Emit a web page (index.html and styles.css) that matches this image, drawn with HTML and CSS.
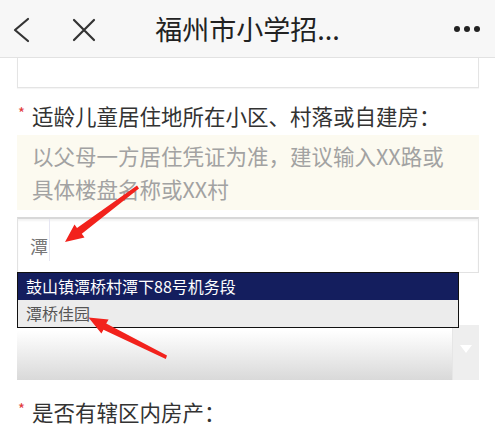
FILE: index.html
```html
<!DOCTYPE html>
<html lang="zh-CN">
<head>
<meta charset="utf-8">
<title>福州市小学招生</title>
<link rel="stylesheet" href="styles.css">
</head>
<body>
<div class="page">
  <header class="topbar">
    <div class="nav-left">
      <svg class="icon-back" width="20" height="28" viewBox="0 0 20 28"><path d="M17 3 L4 14 L17 25" fill="none" stroke="#333" stroke-width="2.2" stroke-linecap="round" stroke-linejoin="round"/></svg>
      <svg class="icon-close" width="26" height="26" viewBox="0 0 26 26"><path d="M3 3 L23 23 M23 3 L3 23" fill="none" stroke="#333" stroke-width="2.2" stroke-linecap="round"/></svg>
    </div>
    <div class="title">福州市小学招...</div>
    <div class="nav-right">
      <span class="dot"></span><span class="dot"></span><span class="dot"></span>
    </div>
  </header>

  <main class="form">
    <div class="prev-input"></div>

    <div class="label"><span class="req">*</span>适龄儿童居住地所在小区、村落或自建房：</div>
    <div class="hint">以父母一方居住凭证为准，建议输入XX路或具体楼盘名称或XX村</div>

    <div class="field-wrap">
      <div class="text-input"><span class="value">潭</span><span class="caret"></span></div>
      <ul class="suggest">
        <li class="item active">鼓山镇潭桥村潭下88号机务段</li>
        <li class="item">潭桥佳园</li>
      </ul>
    </div>

    <div class="select">
      <div class="select-body"></div>
      <div class="select-btn">
        <svg class="tri" width="14" height="10" viewBox="0 0 14 10"><polygon points="1,1 13,1 7,9" fill="#ffffff"/></svg>
      </div>
    </div>

    <div class="label label-2"><span class="req">*</span>是否有辖区内房产：</div>
  </main>

  <svg class="arrows" width="495" height="427" viewBox="0 0 495 427">
    <path d="M137 185.5 L139 188.5 L81.8 233.8 L84.5 237.5 L65 242 L74.5 224.6 L77 228 Z" fill="#f2221c"/>
    <path d="M167 355.5 L165.8 359 L103.5 329.8 L101.4 333.5 L88.5 317.5 L108.6 319.5 L106.2 323.5 Z" fill="#f2221c"/>
  </svg>
</div>
</body>
</html>
```

FILE: styles.css
```css
* { box-sizing: border-box; }
html, body { margin: 0; padding: 0; }
body {
  width: 495px;
  height: 427px;
  overflow: hidden;
  background: #fff;
  font-family: "Noto Sans CJK SC", "Noto Sans", sans-serif;
  color: #333;
}
.page { position: relative; width: 495px; height: 427px; }

.topbar {
  height: 58px;
  background: #f7f7f7;
  border-bottom: 1px solid #e2e2e2;
  display: flex;
  align-items: center;
  position: relative;
}
.nav-left {
  display: flex;
  align-items: center;
  gap: 40px;
  padding-left: 11px;
  width: 140px;
}
.icon-back { display: block; margin-top: 2px; }
.icon-close { display: block; margin-top: 2px; }
.title {
  position: absolute;
  left: 0; right: 0;
  top: 0;
  height: 58px;
  line-height: 58px;
  text-align: center;
  font-size: 27px;
  color: #222;
  pointer-events: none;
}
.nav-right {
  margin-left: auto;
  display: flex;
  gap: 4px;
  padding-right: 15px;
}
.dot {
  width: 6px; height: 6px;
  border-radius: 50%;
  background: #222;
}

.form { padding: 0 16px 0 17px; }

.prev-input {
  height: 30px;
  border: 1px solid #e4e4e4;
  border-top: none;
  box-shadow: 0 1px 1px rgba(0,0,0,0.04);
}

.label {
  margin-top: 12px;
  font-size: 21.5px;
  line-height: 32px;
  color: #333;
  position: relative;
  padding-left: 15px;
}
.req {
  position: absolute;
  left: 1px;
  top: -3px;
  color: #e23b3b;
  font-size: 15px;
}

.hint {
  margin-top: 3px;
  background: #fcfaf0;
  color: #a2a2a2;
  font-size: 21.5px;
  line-height: 33px;
  padding: 4px 14px 5px 15px;
}

.field-wrap { position: relative; margin-top: 7px; }
.text-input {
  height: 56px;
  border: 1px solid #e2e2e2;
  border-top: 2px solid #d8d8d8;
  box-shadow: inset 0 2px 2px rgba(0,0,0,0.05);
  display: flex;
  align-items: center;
  padding-left: 12px;
}
.value { font-size: 18px; color: #777; }
.caret {
  align-self: flex-start;
  width: 1px;
  height: 42px;
  background: #e6e6f2;
  margin-left: 1px;
}

.suggest {
  position: absolute;
  left: 0;
  top: 55px;
  width: 442px;
  margin: 0;
  padding: 0;
  list-style: none;
  border: 1px solid #111;
  background: #ececec;
  z-index: 2;
}
.item {
  height: 27px;
  line-height: 27px;
  font-size: 16px;
  padding-left: 8px;
  color: #555;
  background: #ececec;
}
.item.active {
  background: #141e5e;
  color: #fff;
}

.select {
  margin-top: 52px;
  height: 55px;
  display: flex;
}
.select-body {
  flex: 1;
  background: linear-gradient(#ffffff 10%, #d9d9d9 100%);
}
.select-btn {
  width: 27px;
  background-color: #eeeeee;
  border-left: 1px solid #e6e6e6;
  display: flex;
  justify-content: center;
  align-items: flex-start;
  padding-top: 19px;
}
.tri { display: block; }

.label-2 { margin-top: 16px; }

.arrows {
  position: absolute;
  left: 0; top: 0;
  z-index: 5;
  pointer-events: none;
}
```
